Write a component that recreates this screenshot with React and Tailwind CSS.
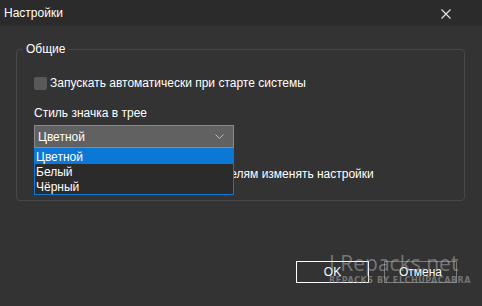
export default function App() {
  const font = { fontFamily: '"Liberation Sans", Arial, sans-serif' };
  return (
    <div className="w-[482px] h-[306px] bg-[#333333] text-white text-[12px] relative overflow-hidden" style={font}>
      <div className="h-[26px] bg-[#2b2b2b] flex items-center justify-between pl-[4px] pr-[31px]">
        <span className="leading-none">Настройки</span>
        <svg width="10" height="10" viewBox="0 0 10 10" className="mt-[1px]">
          <path d="M0.5 0.5 L9.5 9.5 M9.5 0.5 L0.5 9.5" stroke="#e0e0e0" strokeWidth="1.2" />
        </svg>
      </div>
      <div className="pt-[23px] px-[16px]">
        <div className="relative h-[152px] w-[449px] border border-[#484848] rounded-[4px] pl-[17px] pt-[26px]">
          <span className="absolute -top-[9px] left-[6px] bg-[#333333] px-[3px] leading-[16px]">Общие</span>
          <div className="flex items-center gap-[3px] h-[14px]">
            <div className="w-[13px] h-[13px] rounded-[2px] bg-[#595959]"></div>
            <span className="leading-none">Запускать автоматически при старте системы</span>
          </div>
          <div className="mt-[17px] leading-none">Стиль значка в трее</div>
          <div className="relative mt-[6px] w-[200px]">
            <div className="h-[23px] bg-[#616161] border border-[#8a8a8a] flex items-center justify-between pl-[3px] pr-[9px]">
              <span className="leading-none">Цветной</span>
              <svg width="9" height="5" viewBox="0 0 9 5">
                <path d="M0.5 0.5 L4.5 4.5 L8.5 0.5" stroke="#bdbdbd" fill="none" strokeWidth="1" />
              </svg>
            </div>
            <div className="absolute left-0 top-[23px] w-[200px] border border-[#0a78d4] bg-[#2b2b2b] z-10">
              <div className="h-[15px] bg-[#0a78d4] flex items-center pl-[1px] leading-none">Цветной</div>
              <div className="h-[15px] flex items-center pl-[1px] leading-none">Белый</div>
              <div className="h-[15px] flex items-center pl-[1px] leading-none">Чёрный</div>
            </div>
          </div>
          <div className="flex items-center gap-[3px] h-[14px] mt-[19px]">
            <div className="w-[13px] h-[13px] rounded-[2px] bg-[#595959]"></div>
            <span className="leading-none whitespace-nowrap">Не разрешать другим пользователям изменять настройки</span>
          </div>
        </div>
      </div>
      <div className="absolute left-0 right-0 top-[261px] flex justify-end gap-[15px] pr-[25px]">
        <button className="w-[73px] h-[22px] border border-white flex items-center justify-center leading-none">OK</button>
        <button className="w-[73px] h-[22px] border border-[#7a7a7a] flex items-center justify-center leading-none">Отмена</button>
      </div>
      <div className="absolute left-[329px] top-[253px] pointer-events-none whitespace-nowrap">
        <div className="text-[21px] leading-none text-[#c8c8c8]/45" style={{ fontFamily: '"Open Sans", sans-serif' }}>I Repacks.net</div>
        <div className="text-[9px] font-bold tracking-[0.5px] leading-none mt-[2px] text-[#a0a0a0]/60" style={{ fontFamily: '"DejaVu Sans Condensed", "DejaVu Sans", sans-serif' }}>REPACKS BY ELCHUPACABRA</div>
      </div>
    </div>
  );
}
